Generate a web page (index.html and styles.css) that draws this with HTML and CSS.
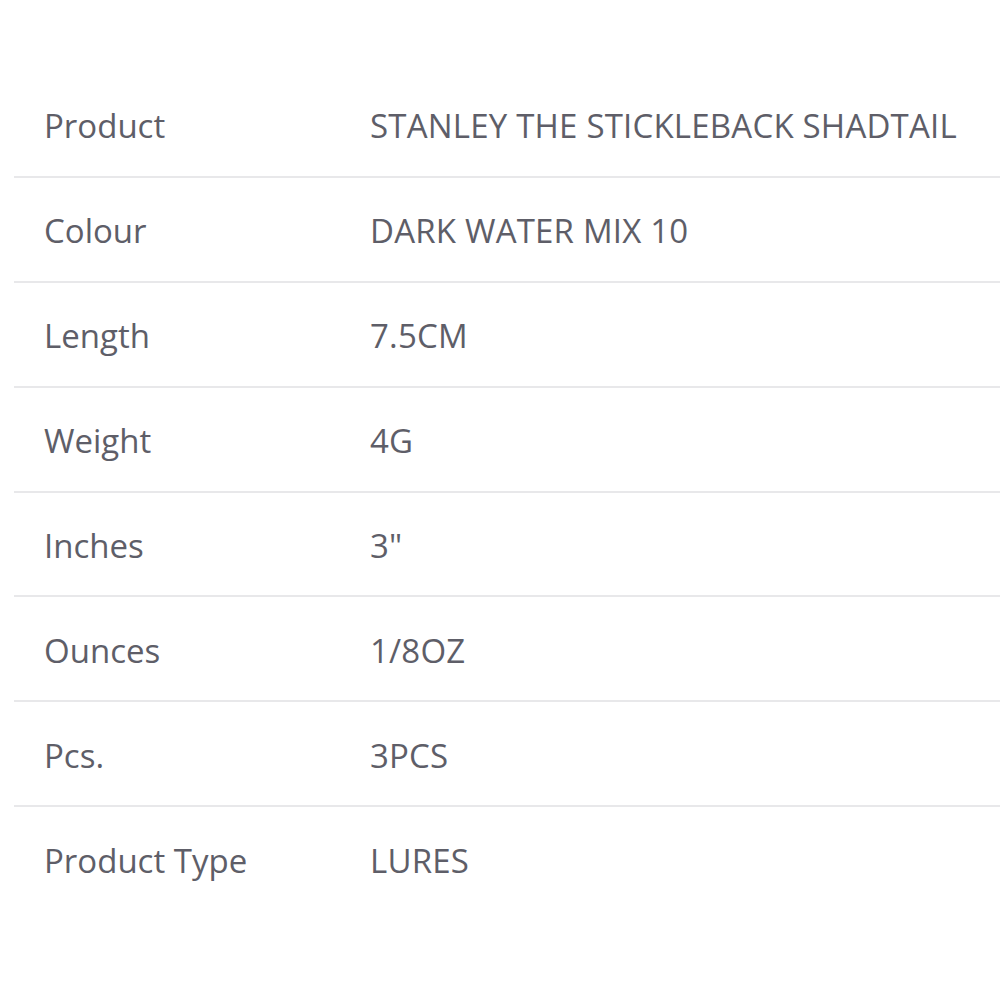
FILE: index.html
```html
<!DOCTYPE html>
<html>
<head>
<meta charset="utf-8">
<link rel="stylesheet" href="styles.css">
</head>
<body>
<table class="specs">
  <tbody>
    <tr><td class="label">Product</td><td class="value">STANLEY THE STICKLEBACK SHADTAIL</td></tr>
    <tr><td class="label">Colour</td><td class="value">DARK WATER MIX 10</td></tr>
    <tr><td class="label">Length</td><td class="value">7.5CM</td></tr>
    <tr><td class="label">Weight</td><td class="value">4G</td></tr>
    <tr><td class="label">Inches</td><td class="value">3"</td></tr>
    <tr><td class="label">Ounces</td><td class="value">1/8OZ</td></tr>
    <tr><td class="label">Pcs.</td><td class="value">3PCS</td></tr>
    <tr><td class="label">Product Type</td><td class="value">LURES</td></tr>
  </tbody>
</table>
</body>
</html>
```
FILE: styles.css
```css
html, body {
  margin: 0;
  padding: 0;
  background: #ffffff;
}
body {
  padding: 72px 0 0 14px;
  font-family: "Open Sans", "Noto Sans", sans-serif;
  color: #5e5e68;
  overflow: hidden;
}
.specs {
  border-collapse: collapse;
  width: 986px;
  table-layout: fixed;
}
.specs tr {
  height: 104.9px;
}
.specs tr + tr td {
  border-top: 2px solid #e8e8ea;
}
.specs td {
  padding: 3px 0 0 0;
  vertical-align: middle;
  font-size: 33px;
  white-space: nowrap;
}
.label {
  width: 356px;
  padding-left: 30px !important;
  box-sizing: border-box;
}
.value {
  letter-spacing: 0.2px;
}
```
